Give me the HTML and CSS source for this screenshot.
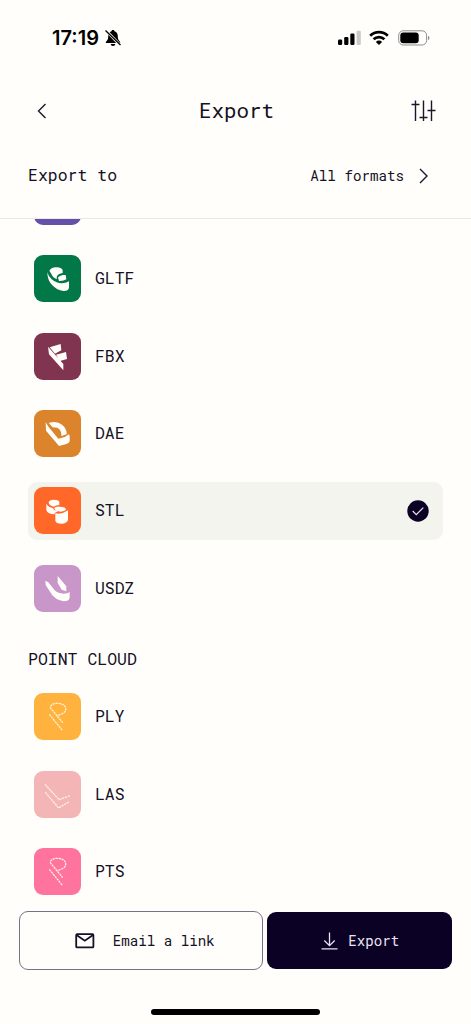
FILE: index.html
```html
<!DOCTYPE html>
<html lang="en">
<head>
<meta charset="utf-8">
<title>Export</title>
<link rel="stylesheet" href="styles.css">
</head>
<body>
<div class="screen">
  <div class="status">
    <span class="clock">17:19</span>
    <svg class="bell" width="18" height="18" viewBox="0 0 18 18"><path d="M9 1c-.9 0-1.400.5-1.500 1.200C5 3 4.200 5 4.200 7.500c0 3-1 4-2.200 5.200-.5.600-.2 1.300.5 1.300h13c.7 0 1-.7.500-1.300-1.200-1.200-2.200-2.200-2.200-5.200 0-2.500-.8-4.500-3.300-5.300C10.400 1.500 9.900 1 9 1zM6.700 15h4.600a2.300 2 0 0 1-4.600 0z"/><path d="M2 1.500 16.500 16.500" stroke="#fffefb" stroke-width="2.600"/><path d="M1.500 1.500 16.500 16" stroke="#000" stroke-width="1.300"/></svg>
    <svg class="signal" width="24" height="16" viewBox="0 0 24 16"><rect x="0" y="9.500" width="4.200" height="5.500" rx="1.200"/><rect x="6.200" y="7" width="4.200" height="8" rx="1.200"/><rect x="12.300" y="3.500" width="4.200" height="11.500" rx="1.200"/><rect x="18.600" y=".7" width="4.200" height="14.300" rx="1.200" fill="#c9c9c7"/></svg>
    <svg class="wifi" width="20" height="16" viewBox="0 0 20 16"><g fill="none" stroke="#000" stroke-width="2.700"><path d="M1.200 5.700a12.600 12.600 0 0 1 17.600 0"/><path d="M4.600 9.300a7.700 7.700 0 0 1 10.800 0"/></g><path d="M10 15 6.900 11.900a4.400 4.400 0 0 1 6.200 0z"/></svg>
    <svg class="battery" width="32" height="16" viewBox="0 0 32 16"><rect x=".7" y=".8" width="27.900" height="14.200" rx="4.500" fill="none" stroke="#8d8d8b"/><rect x="2.300" y="2.500" width="18.400" height="10.800" rx="3"/><path d="M30 5.800c2 .8 2 3.600 0 4.400z" fill="#8d8d8b"/></svg>
  </div>

  <div class="nav">
    <svg class="back" width="10" height="16" viewBox="0 0 10 16"><path d="M8.500 1 1.500 8l7 7"/></svg>
    <h1 class="title">Export</h1>
    <svg class="sliders" width="26" height="24" viewBox="0 0 26 24"><path d="M5.500 1.500V22M1.500 5.500h8M13.500 1.500V22M9.500 18.500h8M21.500 1.500V22M17.500 11.500h8"/></svg>
  </div>

  <div class="filter">
    <span class="filter-label">Export to</span>
    <span class="filter-value">All formats</span>
    <svg class="forward" width="10" height="16" viewBox="0 0 10 16"><path d="m1 1 7 7-7 7"/></svg>
  </div>

  <div class="list">
    <div class="row row-cut"><div class="tile violet"></div></div>

    <div class="row">
      <svg class="tile green" viewBox="42 30 141 141"><path d="M88 77q7-11 22-10 16 1 18 9v8q-14 2-17 10-3 5 1 8-12-2-18-15z"/><path d="M114 97q5-5 14-7h9l2 13q-9 6-22 5z"/><path d="M82 82q3 12 13 21 16 13 32 12 14-1 20-6v20q-3 10-17 9-19-2-33-17-15-15-15-39z"/></svg>
      <span class="name">GLTF</span>
    </div>
    <div class="row">
      <svg class="tile plum" viewBox="42 263 141 141"><path d="m89 306 33-10 2 19-19 10zM108 328l30-8 3 21-21 6zM84 304l46 52v19l-43-48z"/></svg>
      <span class="name">FBX</span>
    </div>
    <div class="row">
      <svg class="tile ochre" viewBox="42 30 141 141"><path d="M86 69q24-8 41 6 14 12 13 28l-16 5q2-17-12-25l-14-1zM77 67l9 14 29 35 19-5 13-8q3 5 2 21-2 6-10 8l-22 6-39-46z"/></svg>
      <span class="name">DAE</span>
    </div>
    <div class="row selected">
      <svg class="tile orange" viewBox="42 261 141 141"><path d="M86 307q2-8 15-8 15 0 17 6v10q-14 2-16 5-15-2-16-13z"/><path d="M79 311q7 11 20 13 1 8 16 9l-11 6v4q-23-1-25-14zM103 325q2-6 16-5 18 0 19 8-2 6-16 7-16 0-19-10zM106 340q18 5 38-9v29q-4 11-20 11-16 0-18-9z"/></svg>
      <span class="name">STL</span>
      <svg class="check" width="22" height="22" viewBox="0 0 22 22"><circle cx="11" cy="11" r="10.700"/><path d="m5.700 11 3.600 3.600 7-7"/></svg>
    </div>
    <div class="row">
      <svg class="tile lilac" viewBox="42 29 141 141"><path d="m113 62 26 31v15l-14-5-12-20zM76 76l9 5 19 24q11 10 27 10 12 0 18-5v18q-3 10-17 10-20-2-35-18L77 89z"/></svg>
      <span class="name">USDZ</span>
    </div>

    <h2 class="section">POINT CLOUD</h2>

    <div class="row">
      <svg class="tile amber dots" viewBox="42 25 141 141"><path d="m90 68 38 46M88 89l39 48M91 65q8-10 24-9 20 2 22 15 1 12-12 17l-14 6"/></svg>
      <span class="name">PLY</span>
    </div>
    <div class="row">
      <svg class="tile rose dots" viewBox="42 258 141 141"><path d="m75 298 42 46 33-12M76 322l40 47 32-19"/></svg>
      <span class="name">LAS</span>
    </div>
    <div class="row">
      <svg class="tile pink dots" viewBox="42 24 141 141"><path d="m90 67 38 46M88 88l39 48M91 64q8-10 24-9 20 2 22 15 1 12-12 17l-14 6"/></svg>
      <span class="name">PTS</span>
    </div>
  </div>

  <div class="actions">
    <div class="button email">
      <svg class="mail" width="20" height="16" viewBox="0 0 20 16"><rect x="1.200" y="1.200" width="17.200" height="13.200" rx="1"/><path d="m1.500 2 8.300 5.700L18 2"/></svg>
      <span>Email a link</span>
    </div>
    <div class="button export">
      <svg class="download" width="17" height="18" viewBox="0 0 17 18"><path d="M8.500.5v13M3.300 8.500l5.200 5.200 5.200-5.200M.5 16.800h16"/></svg>
      <span>Export</span>
    </div>
  </div>
  <div class="home"></div>
</div>
</body>
</html>
```
FILE: styles.css
```css
* { box-sizing: border-box; }

body {
  margin: 0;
  background: #fffefb;
  color: #151126;
  font-family: "Roboto Mono", "DejaVu Sans Mono", monospace;
}

.screen {
  width: 471px;
  height: 1024px;
  display: flex;
  flex-direction: column;
  overflow: hidden;
}

svg { flex: none; }

.status {
  height: 76px;
  flex: none;
  display: flex;
  align-items: center;
  padding: 0 41px 0 52px;
}
.clock {
  font: 600 20px/24px Inter, sans-serif;
  color: #000;
  width: 51.5px;
  white-space: nowrap;
}
.signal { margin-left: auto; }
.wifi { margin-left: 7px; }
.battery { margin-left: 9px; }

.nav {
  height: 69px;
  flex: none;
  display: grid;
  grid-template-columns: 1fr auto 1fr;
  align-items: center;
  padding: 0 35px 0 37px;
}
.title {
  margin: 0;
  padding-bottom: 2px;
  font-size: 20.9px;
  line-height: 28px;
  font-weight: 400;
}
.sliders { justify-self: end; }
.back, .forward, .sliders {
  fill: none;
  stroke: #1b172b;
  stroke-width: 1.4;
}

.filter {
  height: 74px;
  flex: none;
  display: flex;
  align-items: center;
  padding: 0 42px 12px 28px;
  border-bottom: 1px solid #e9e8e4;
}
.filter-label { font-size: 16.5px; padding-bottom: 2px; }
.filter-value { font-size: 14.2px; margin-left: auto; }
.forward { margin-left: 15px; }

.list {
  flex: 1;
  min-height: 0;
  overflow: hidden;
  padding: 0 28px;
}
.row {
  height: 58px;
  margin-bottom: 19.4px;
  padding: 0 14px 1px 6px;
  display: flex;
  align-items: center;
  border-radius: 9px;
}
.row-cut { margin-top: -46.1px; }
.selected { background: #f4f4ef; }

.tile {
  width: 47px;
  height: 47px;
  flex: none;
  border-radius: 9px;
  fill: #fffefb;
}
.violet { background: #6350a9; }
.green { background: #027848; }
.plum { background: #81344f; }
.ochre { background: #db842b; }
.orange { background: #ff6829; }
.lilac { background: #c896c8; }
.amber { background: #ffb23d; }
.rose { background: #f4b5b7; }
.pink { background: #ff749f; }
.dots {
  fill: none;
  stroke: #fff3dc;
  stroke-width: 3.8;
  stroke-dasharray: 7 2;
}

.name { margin-left: 14px; padding-bottom: 2px; font-size: 16.4px; }
.check { margin-left: auto; fill: #0b0124; }
.check path {
  fill: none;
  stroke: #e4dff0;
  stroke-width: 1.3;
}
.section {
  margin: 31.1px 0 19.4px;
  font-size: 16.5px;
  line-height: 20px;
  font-weight: 400;
}

.actions {
  flex: none;
  display: grid;
  grid-template-columns: 244px 185px;
  gap: 4.5px;
  align-items: center;
  padding: 0 19px 0 18.7px;
  background: #fffefb;
}
.button {
  display: flex;
  align-items: center;
  border-radius: 9px;
  font-size: 14.2px;
}
.email {
  height: 59px;
  padding-left: 55px;
  gap: 18px;
  border: 1px solid #77728a;
}
.mail {
  fill: none;
  stroke: #151126;
  stroke-width: 1.8;
}
.export {
  height: 57px;
  padding-left: 54px;
  gap: 10px;
  background: #0b0124;
  color: #e8e3f3;
}
.download {
  fill: none;
  stroke: #e8e3f3;
  stroke-width: 1.3;
}
.home {
  flex: none;
  width: 169px;
  height: 6px;
  margin: 38.5px 0 9.5px 151px;
  border-radius: 3px;
  background: #000;
}
```
